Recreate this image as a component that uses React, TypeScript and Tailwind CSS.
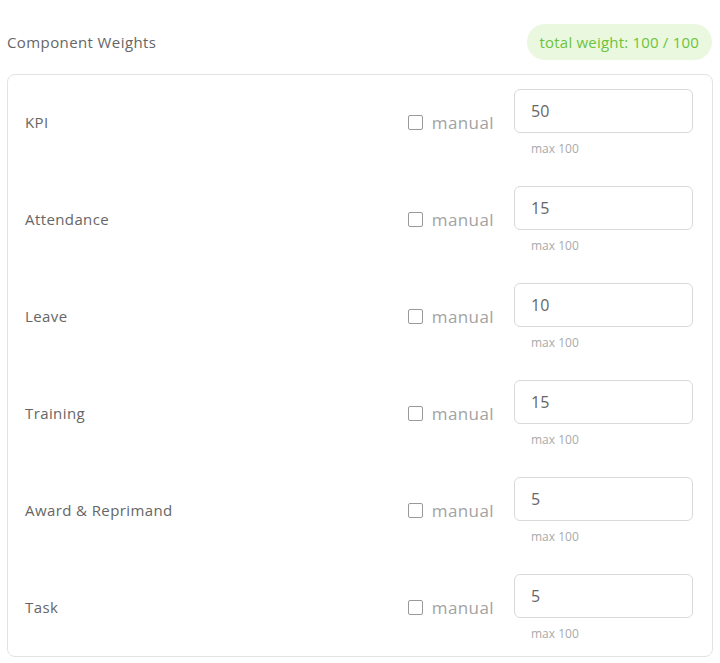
const rows = [
  { name: "KPI", value: 50 },
  { name: "Attendance", value: 15 },
  { name: "Leave", value: 10 },
  { name: "Training", value: 15 },
  { name: "Award & Reprimand", value: 5 },
  { name: "Task", value: 5 },
];

function WeightRow({ name, value }: { name: string; value: number }) {
  return (
    <div className="flex items-center">
      <span className="flex-1 text-[15px] text-[#666] tracking-[0.4px]">{name}</span>
      <label className="flex items-center gap-[9px] mr-[20px] text-[17px] tracking-[0.4px] text-[#a3a3a3]">
        <span className="w-[15px] h-[15px] border-[1.5px] border-[#999] rounded-[2px]" />
        manual
      </label>
      <div className="flex flex-col w-[179px]">
        <input
          defaultValue={value}
          className="h-[44px] border border-[#d9d9d9] rounded-[6px] px-[16px] text-[16px] text-[#666] outline-none"
        />
        <span className="mt-[8px] ml-[17px] text-[12px] leading-[15px] text-[#aaa]">max 100</span>
      </div>
    </div>
  );
}

export default function App() {
  return (
    <div className="bg-white w-[720px] h-[663px] pt-[24px] px-[7px]" style={{ fontFamily: "'Open Sans', 'Noto Sans', sans-serif" }}>
      {/* Header */}
      <div className="flex items-center justify-between pr-[1px]">
        <h2 className="text-[15px] text-[#666] tracking-[0.4px]">Component Weights</h2>
        <span className="h-[36px] flex items-center px-[13px] rounded-full bg-[#eaf8e0] text-[15px] tracking-[0.2px] text-[#6cc33c]">
          total weight: 100 / 100
        </span>
      </div>

      {/* Rows */}
      <div className="mt-[14px] border border-[#e3e3e3] rounded-[8px] pl-[17px] pr-[19px] pt-[14px] pb-[15px] flex flex-col gap-[30px]">
        {rows.map((r) => (
          <WeightRow key={r.name} {...r} />
        ))}
      </div>
    </div>
  );
}
